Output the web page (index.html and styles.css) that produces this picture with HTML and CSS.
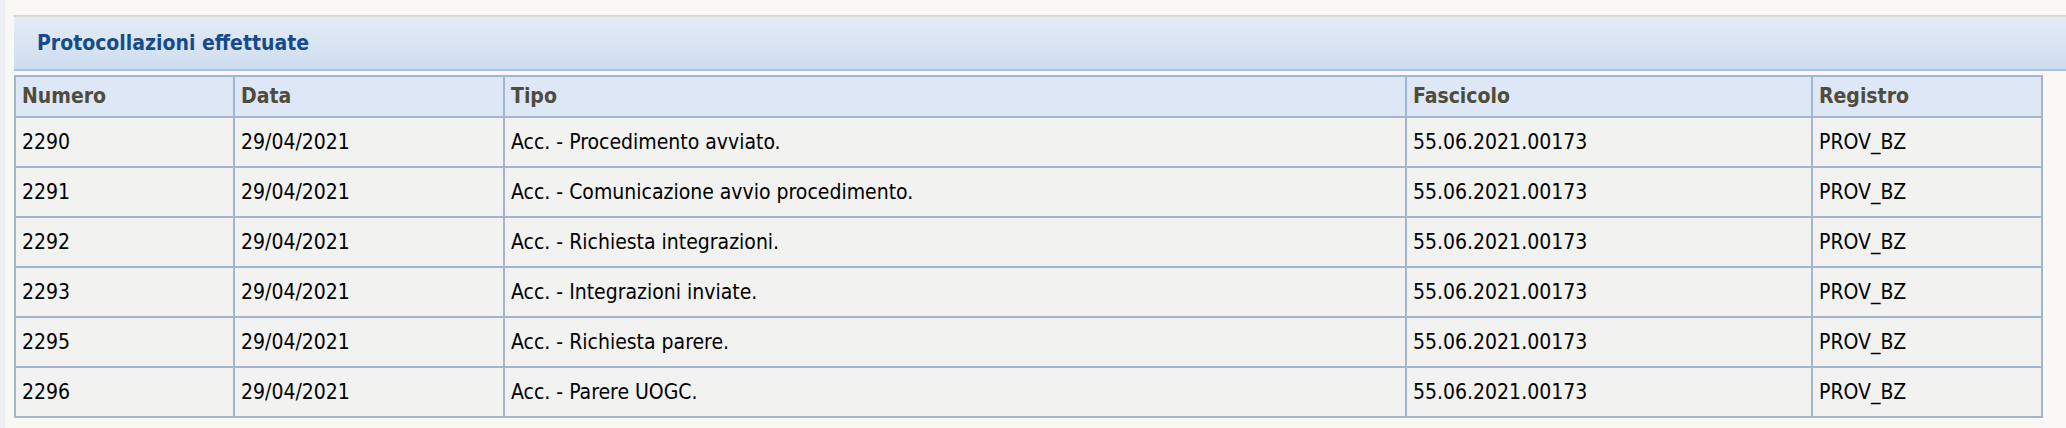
FILE: index.html
```html
<!DOCTYPE html>
<html lang="it">
<head>
<meta charset="utf-8">
<title>Protocollazioni effettuate</title>
<link rel="stylesheet" href="styles.css">
</head>
<body>
<div class="layout">
  <div class="side-strip"></div>
  <main class="content">
    <section class="panel">
      <header class="panel-header">
        <h2 class="panel-title">Protocollazioni effettuate</h2>
      </header>
      <table class="grid">
        <colgroup>
          <col class="c-num">
          <col class="c-data">
          <col class="c-tipo">
          <col class="c-fasc">
          <col class="c-reg">
        </colgroup>
        <thead>
          <tr><th>Numero</th><th>Data</th><th>Tipo</th><th>Fascicolo</th><th>Registro</th></tr>
        </thead>
        <tbody>
          <tr><td>2290</td><td>29/04/2021</td><td>Acc. - Procedimento avviato.</td><td>55.06.2021.00173</td><td>PROV_BZ</td></tr>
          <tr><td>2291</td><td>29/04/2021</td><td>Acc. - Comunicazione avvio procedimento.</td><td>55.06.2021.00173</td><td>PROV_BZ</td></tr>
          <tr><td>2292</td><td>29/04/2021</td><td>Acc. - Richiesta integrazioni.</td><td>55.06.2021.00173</td><td>PROV_BZ</td></tr>
          <tr><td>2293</td><td>29/04/2021</td><td>Acc. - Integrazioni inviate.</td><td>55.06.2021.00173</td><td>PROV_BZ</td></tr>
          <tr><td>2295</td><td>29/04/2021</td><td>Acc. - Richiesta parere.</td><td>55.06.2021.00173</td><td>PROV_BZ</td></tr>
          <tr><td>2296</td><td>29/04/2021</td><td>Acc. - Parere UOGC.</td><td>55.06.2021.00173</td><td>PROV_BZ</td></tr>
        </tbody>
      </table>
    </section>
  </main>
</div>
</body>
</html>
```

FILE: styles.css
```css
html, body {
  margin: 0;
  padding: 0;
  background: #f9f8f4;
}

body {
  font-family: "DejaVu Sans Condensed", "DejaVu Sans", Verdana, sans-serif;
  font-stretch: condensed;
  font-size: 21px;
  color: #000;
}

.layout {
  display: flex;
  min-height: 428px;
}

.side-strip {
  width: 5px;
  flex: 0 0 5px;
  background: #eef0f5;
}

.content {
  flex: 1 1 auto;
  padding: 15px 0 0 9px;
}

.panel-header {
  height: 52px;
  border-top: 2px solid #d6d6d2;
  border-bottom: 2px solid #a9c3e8;
  background: linear-gradient(to bottom, #e4ecf7 0%, #dae5f3 50%, #cddcef 100%);
  display: flex;
  align-items: center;
  padding-left: 23px;
}

.panel-title {
  margin: 0;
  font-size: 21px;
  font-weight: bold;
  color: #174a8b;
}

.grid {
  margin-top: 4px;
  width: 2027px;
  border-collapse: collapse;
  table-layout: fixed;
  border: 2px solid #a1b6d1;
}

.c-num { width: 219px; }
.c-data { width: 270px; }
.c-tipo { width: 902px; }
.c-fasc { width: 406px; }
.c-reg { width: 230px; }

.grid th,
.grid td {
  border: 2px solid #a1b6d1;
  text-align: left;
  vertical-align: middle;
  padding: 0 6px;
  line-height: 23px;
  white-space: nowrap;
}

.grid th {
  height: 39px;
  background: #dee7f5;
  color: #4e4c3c;
  font-weight: bold;
}

.grid td {
  height: 48px;
  background: #f2f2f0;
}
```
